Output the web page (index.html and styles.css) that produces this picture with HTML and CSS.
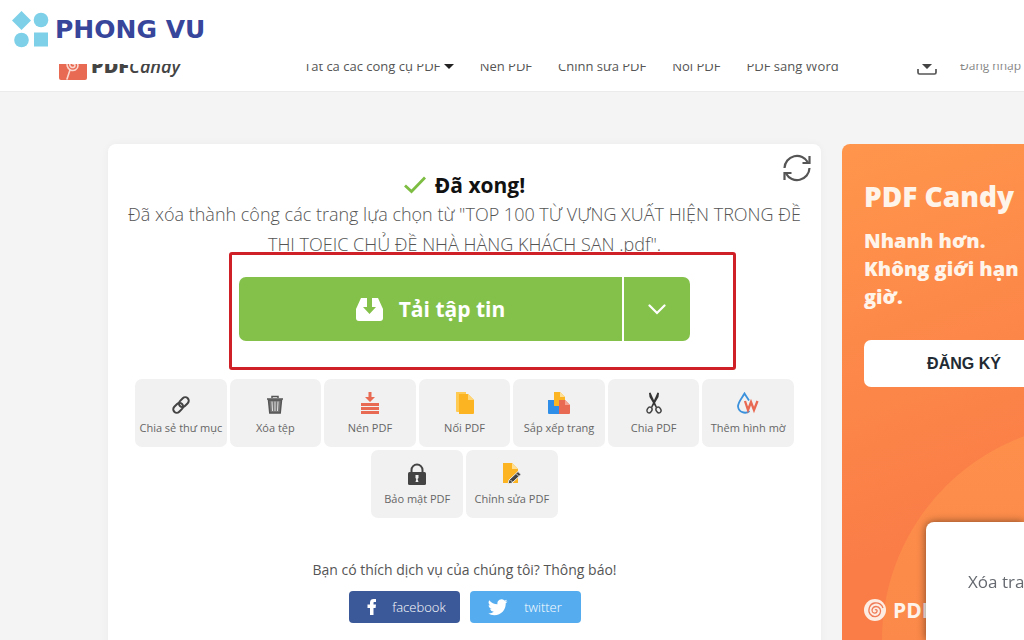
FILE: index.html
```html
<!DOCTYPE html>
<html lang="vi">
<head>
    <meta charset="UTF-8">
    <meta name="viewport" content="width=device-width, initial-scale=1.0">
    <title>PDF Candy</title>
    <link rel="stylesheet" href="styles.css">
</head>
<body>
    <div class="brand-bar">
        <svg class="brand-icon" width="37" height="37" viewBox="0 0 37 37" fill="#7dd0e8">
            <path d="M9.500 0L19 9.500 9.500 19 0 9.500z"/>
            <circle cx="29" cy="9" r="7.300"/>
            <circle cx="9.500" cy="29" r="7.300"/>
            <rect x="22" y="21.500" width="14" height="14"/>
        </svg>
        <span class="brand-name">PHONG VU</span>
    </div>

    <header class="nav">
        <a class="nav-logo" href="#">
            <svg width="28" height="28" viewBox="0 0 28 28">
                <rect width="28" height="28" rx="2" fill="#e96a53"/>
                <g fill="none" stroke="#fbd9d0" stroke-width="1.600" stroke-linecap="round">
                    <path d="M14 12a1.500 1.500 0 0 1 2 1.500c0 2-2.500 2.500-4 1.500-2-1.500-1.500-4.500.5-5.500 3-1.500 6.500.5 6.500 4 0 4-4 6-7.500 4.500-3.500-1.600-4.500-6-2.500-9 2.500-3.500 7.500-4 10.500-1.500"/>
                    <path d="M11 18l-3 9"/>
                </g>
            </svg>
            <b>PDF</b><i>Candy</i>
        </a>
        <nav class="nav-links">
            <a href="#">Tất cả các công cụ PDF <span class="caret"></span></a>
            <a href="#">Nén PDF</a>
            <a href="#">Chỉnh sửa PDF</a>
            <a href="#">Nối PDF</a>
            <a href="#">PDF sang Word</a>
        </nav>
        <a class="nav-download" href="#" aria-label="Download">
            <svg width="20" height="18" viewBox="0 0 20 18">
                <path d="M7 0h6v5h4l-7 7-7-7h4z" fill="#444"/>
                <path d="M1 12v3.500a1.500 1.500 0 0 0 1.500 1.500h15a1.500 1.500 0 0 0 1.500-1.500V12" fill="none" stroke="#555" stroke-width="1.700"/>
            </svg>
        </a>
        <a class="nav-login" href="#">Đăng nhập</a>
    </header>

    <main class="page">
        <section class="card">
            <button class="refresh-btn" aria-label="Refresh">
                <svg width="28" height="28" viewBox="0 0 28 28" fill="none" stroke="#555" stroke-width="2.200">
                    <path d="M1.500 14A12.500 12.500 0 0 1 25 8.500M26.500 14A12.500 12.500 0 0 1 3 19.500"/>
                    <path d="M26.500 2v7h-7M1.500 26v-7h7"/>
                </svg>
            </button>

            <h1 class="title">
                <svg width="22" height="18" viewBox="0 0 22 18" fill="none" stroke="#7dbd42" stroke-width="2.800">
                    <path d="M1 9.500l6.500 6L21 1.500"/>
                </svg>
                Đã xong!
            </h1>
            <p class="message">Đã xóa thành công các trang lựa chọn từ "TOP 100 TỪ VỰNG XUẤT HIỆN TRONG ĐỀ<br>THI TOEIC CHỦ ĐỀ NHÀ HÀNG KHÁCH SAN .pdf".</p>

            <div class="download">
                <button class="download-btn">
                    <svg width="27" height="23" viewBox="0 0 27 23">
                        <path d="M5 0h17l5 11v9a3 3 0 0 1-3 3H3a3 3 0 0 1-3-3v-9z" fill="#fff"/>
                        <path d="M11 0h5v9h4l-6.500 7L7 9h4z" fill="#84c14b"/>
                    </svg>
                    Tải tập tin
                </button>
                <button class="download-more" aria-label="More">
                    <svg width="18" height="11" viewBox="0 0 18 11" fill="none" stroke="#fff" stroke-width="2.200" stroke-linecap="round">
                        <path d="M1.500 1.500L9 9l7.500-7.500"/>
                    </svg>
                </button>
                <div class="highlight"></div>
            </div>

            <div class="tools">
                <button class="tool">
                    <svg width="22" height="22" viewBox="0 0 22 22" fill="none" stroke="#444" stroke-width="2">
                        <g transform="rotate(-45 11 13)">
                            <rect x="1.500" y="9.500" width="11" height="7" rx="3.500"/>
                            <rect x="9.500" y="9.500" width="11" height="7" rx="3.500"/>
                        </g>
                    </svg>
                    Chia sẻ thư mục
                </button>
                <button class="tool">
                    <svg width="22" height="22" viewBox="0 0 22 22" fill="none" stroke="#555" stroke-width="1.500">
                        <path d="M3 7h16M8 6V4.500h6V6"/>
                        <path d="M4.500 8l1.300 13h10.400l1.300-13z" fill="#777"/>
                        <path d="M8 9.500l.5 9.500M11 9.500V19M14 9.500l-.5 9.500" stroke="#e4e4e4" stroke-width="1"/>
                    </svg>
                    Xóa tệp
                </button>
                <button class="tool">
                    <svg width="22" height="22" viewBox="0 0 22 22" fill="#e96a53">
                        <path d="M9.500 0h3v5H16l-5 5-5-5h3.500z"/>
                        <path d="M2 11h18v3H2zM2 15h18v3H2zM2 19h18v3H2z"/>
                    </svg>
                    Nén PDF
                </button>
                <button class="tool">
                    <svg width="22" height="22" viewBox="0 0 22 22">
                        <path d="M2 0h10v20H3a1 1 0 0 1-1-1z" fill="#ffcb52"/>
                        <path d="M5 2h9l6 6v13a1 1 0 0 1-1 1H5z" fill="#fdb422"/>
                        <path d="M14 2v6h6z" fill="#ffd778"/>
                    </svg>
                    Nối PDF
                </button>
                <button class="tool">
                    <svg width="22" height="22" viewBox="0 0 22 22">
                        <path d="M0 8h11v14H1a1 1 0 0 1-1-1z" fill="#2f8fe8"/>
                        <path d="M6 0h6l5 5v9H6z" fill="#fdb422"/>
                        <path d="M12 0v5h5z" fill="#ffdf93"/>
                        <path d="M11 8h6l5 5v8a1 1 0 0 1-1 1H11z" fill="#e96a53"/>
                        <path d="M17 8v5h5z" fill="#f6a394"/>
                    </svg>
                    Sắp xếp trang
                </button>
                <button class="tool">
                    <svg width="22" height="22" viewBox="0 0 22 22" fill="none" stroke="#444" stroke-width="1.500">
                        <path d="M6 1l1.500-.500L14 15l-1 1L6.500 5z" fill="#333" stroke="none"/>
                        <path d="M16 1l-1.500-.500L8 15l1 1 6.500-11z" fill="#333" stroke="none"/>
                        <ellipse cx="6.500" cy="18" rx="2.300" ry="3" transform="rotate(30 6.500 18)"/>
                        <ellipse cx="15.500" cy="18" rx="2.300" ry="3" transform="rotate(-30 15.500 18)"/>
                    </svg>
                    Chia PDF
                </button>
                <button class="tool">
                    <svg width="22" height="22" viewBox="0 0 22 22" fill="none">
                        <path d="M12.500 19A7 7 0 0 1 1 14.500C1 10 5 6 7.500 1.500 9 4 10.500 6 12 8.500" stroke="#3b91dc" stroke-width="1.800"/>
                        <path d="M8 9l3 9 3-8 3 8 3.500-9" stroke="#e96a53" stroke-width="2.300"/>
                    </svg>
                    Thêm hình mờ
                </button>
                <button class="tool">
                    <svg width="22" height="22" viewBox="0 0 22 22">
                        <path d="M5.500 10V7a5.500 5.500 0 0 1 11 0v3" fill="none" stroke="#444" stroke-width="2"/>
                        <rect x="2" y="9" width="18" height="13" rx="1.500" fill="#444"/>
                        <path d="M9.500 12h3v3l-1 1 1 3h-3l.800-3-.800-1z" fill="#f1f1f1"/>
                    </svg>
                    Bảo mật PDF
                </button>
                <button class="tool">
                    <svg width="22" height="22" viewBox="0 0 22 22">
                        <path d="M2 0h9l6 6v14H2z" fill="#fdb422"/>
                        <path d="M11 0v6h6z" fill="#ffdf93"/>
                        <path d="M7 21l1-4L17 8.500l3 3L11 20z" fill="#444" stroke="#f1f1f1"/>
                        <path d="M9.500 17l2 2M15.500 11l2.500 2.500" stroke="#ddd"/>
                    </svg>
                    Chỉnh sửa PDF
                </button>
            </div>

            <p class="share-text">Bạn có thích dịch vụ của chúng tôi? Thông báo!</p>
            <div class="share">
                <button class="share-btn facebook">
                    <svg width="20" height="18" viewBox="0 0 20 18" fill="#fff">
                        <path d="M8 17V10H5.500V6.500H8V4.500C8 2 9.500 1 11.500 1H14v3h-1.500c-.800 0-1 .400-1 1v1.500H14L13.600 10h-2.100v7z"/>
                    </svg>
                    facebook
                </button>
                <button class="share-btn twitter">
                    <svg width="20" height="18" viewBox="0 0 24 22" fill="#fff">
                        <path d="M23.600 3.900a9.700 9.700 0 0 1-2.800.8 4.900 4.900 0 0 0 2.100-2.700c-1 .6-2 1-3.100 1.200a4.900 4.900 0 0 0-8.400 4.500A13.900 13.900 0 0 1 1.300 2.600a4.900 4.900 0 0 0 1.500 6.500c-.8 0-1.600-.2-2.200-.6a4.900 4.900 0 0 0 3.900 4.900c-.7.200-1.500.2-2.200.1a4.900 4.900 0 0 0 4.600 3.400A9.900 9.900 0 0 1 0 18.900a14 14 0 0 0 7.500 2.200c9.100 0 14.400-7.700 13.900-14.600a10 10 0 0 0 2.200-2.600z"/>
                    </svg>
                    twitter
                </button>
            </div>
        </section>

        <aside class="promo">
            <h2>PDF Candy</h2>
            <p>Nhanh hơn.<br>Không giới hạn<br>giờ.</p>
            <button class="signup-btn">ĐĂNG KÝ</button>
            <div class="promo-logo">
                <svg width="22" height="22" viewBox="0 0 22 22">
                    <circle cx="11" cy="11" r="11" fill="#fdece2"/>
                    <path d="M11 11c1-1 2.500 0 2 1.500-.5 2-3.500 2-4.500.5-1.500-2.500.5-5.500 3.500-5.500 4 0 5.500 4 4 7-2 4-7.500 4-10 .5C3.500 11 5.500 5 10.500 4c4-.7 7.500 1.500 8.500 5" fill="none" stroke="#ef7a55" stroke-width="1.300"/>
                </svg>
                PDF
            </div>
        </aside>
    </main>

    <div class="popup">Xóa trang</div>
</body>
</html>
```
FILE: styles.css
```css
* {
    box-sizing: border-box;
}
body {
    margin: 0;
    font-family: "Open Sans", "Noto Sans", sans-serif;
    background-color: #f4f4f4;
    color: #555;
    overflow-x: hidden;
}
h1, h2, p {
    margin: 0;
}
a {
    color: inherit;
    text-decoration: none;
}
button {
    border: none;
    padding: 0;
    font-family: inherit;
    cursor: pointer;
}
svg {
    flex: none;
}

/* top bar, sits over the upper part of the nav */
.brand-bar {
    position: relative;
    z-index: 1;
    display: flex;
    align-items: center;
    gap: 6px;
    height: 64px;
    padding: 0 12px 6px;
    background-color: #fff;
}
.brand-name {
    font-family: "DejaVu Sans", sans-serif;
    font-size: 25px;
    font-weight: bold;
    color: #37459b;
}
.nav {
    display: flex;
    align-items: center;
    height: 52px;
    margin-top: -24px;
    padding-left: 59px;
    background-color: #fff;
    border-bottom: 1px solid #ebebeb;
    font-size: 13px;
    white-space: nowrap;
}
.nav-logo {
    display: flex;
    align-items: center;
    width: 245px;
    font-size: 20px;
    color: #444;
}
.nav-logo svg {
    margin-right: 4px;
}
.nav-logo b {
    font-weight: 800;
}
.nav-logo i {
    font-size: 18px;
    font-weight: 600;
}
.nav-links {
    display: flex;
    flex: 1;
    gap: 26px;
}
.caret {
    display: inline-block;
    border: 5px solid transparent;
    border-top-color: #222;
    border-bottom: none;
    vertical-align: 2px;
}
.nav-download {
    display: flex;
    margin-right: 23px;
}
.nav-login {
    width: 64px;
    font-size: 12px;
    color: #888;
}

.page {
    display: grid;
    grid-template-columns: 1fr 244px;
    gap: 21px;
    margin-right: -62px;
    padding: 52px 0 0 108px;
}
.card {
    position: relative;
    padding: 27px 20px 40px;
    background-color: #fff;
    border-radius: 8px;
    box-shadow: 0 0 8px rgba(0, 0, 0, 0.04);
    text-align: center;
}
.refresh-btn {
    position: absolute;
    top: 10px;
    right: 10px;
    display: flex;
    background: none;
}
.title {
    display: flex;
    align-items: center;
    justify-content: center;
    gap: 9px;
    font-size: 21px;
    line-height: 28px;
    color: #111;
}
.message {
    font-size: 18px;
    font-weight: 300;
    line-height: 30px;
    white-space: nowrap;
}

.download {
    position: relative;
    display: flex;
    gap: 2px;
    max-width: 451px;
    height: 64px;
    margin: 18px auto 0;
}
.download button {
    display: flex;
    align-items: center;
    justify-content: center;
    background-color: #84c14b;
    color: #fff;
}
.download .download-btn {
    flex: 1;
    gap: 16px;
    border-radius: 7px 0 0 7px;
    font-size: 21px;
    font-weight: bold;
}
.download .download-more {
    width: 66px;
    border-radius: 0 7px 7px 0;
}
.highlight {
    position: absolute;
    top: -25px;
    right: -46px;
    bottom: -29px;
    left: -10px;
    border: 3px solid #cf2027;
    border-radius: 3px;
    pointer-events: none;
}

.tools {
    display: flex;
    flex-wrap: wrap;
    justify-content: center;
    gap: 3px;
    max-width: 659px;
    margin: 38px auto 0;
}
.tool {
    display: flex;
    flex-direction: column;
    align-items: center;
    gap: 5px;
    width: calc((100% - 18px) / 7);
    height: 68px;
    padding-top: 13px;
    background-color: #f1f1f1;
    border-radius: 7px;
    font-size: 11px;
    line-height: 18px;
    color: #666;
    white-space: nowrap;
}

.share-text {
    margin-top: 42px;
    font-size: 14px;
    line-height: 20px;
}
.share {
    display: flex;
    justify-content: center;
    gap: 10px;
    margin-top: 11px;
}
.share-btn {
    display: flex;
    align-items: center;
    justify-content: center;
    gap: 10px;
    width: 111px;
    height: 32px;
    border-radius: 4px;
    color: #fff;
    font-size: 13px;
    font-weight: 300;
}
.facebook {
    background-color: #3b5998;
}
.twitter {
    gap: 16px;
    background-color: #55acee;
}

.promo {
    position: relative;
    padding: 32px 22px;
    overflow: hidden;
    border-radius: 8px;
    background: linear-gradient(160deg, #ff964c 0%, #fd8a49 30%, #fa7d47 70%, #fa7d47 100%);
    color: #fff4ea;
    font-weight: 800;
}
.promo::before {
    content: "";
    position: absolute;
    top: 279px;
    left: 40px;
    width: 434px;
    height: 434px;
    border-radius: 50%;
    background: linear-gradient(#fd8f4b, #fa8347);
}
.promo h2 {
    font-size: 28px;
    font-weight: 800;
    line-height: 40px;
}
.promo p {
    margin-top: 11px;
    font-size: 20px;
    line-height: 28px;
    white-space: nowrap;
}
.signup-btn {
    width: 100%;
    height: 47px;
    margin-top: 29px;
    border-radius: 7px;
    background-color: #fff;
    color: #222b33;
    font-family: "Liberation Sans", sans-serif;
    font-size: 16px;
    font-weight: bold;
}
.promo-logo {
    position: relative;
    display: flex;
    align-items: center;
    gap: 7px;
    margin-top: 208px;
    font-size: 21px;
    font-weight: bold;
    line-height: 30px;
}

.popup {
    position: fixed;
    right: 0;
    bottom: 0;
    z-index: 2;
    width: 98px;
    height: 118px;
    padding: 48px 0 0 42px;
    overflow: hidden;
    background-color: #fff;
    border-radius: 8px 0 0 0;
    box-shadow: 0 0 8px rgba(0, 0, 0, 0.5);
    font-size: 17px;
    line-height: 24px;
    color: #666a70;
    white-space: nowrap;
}
```
